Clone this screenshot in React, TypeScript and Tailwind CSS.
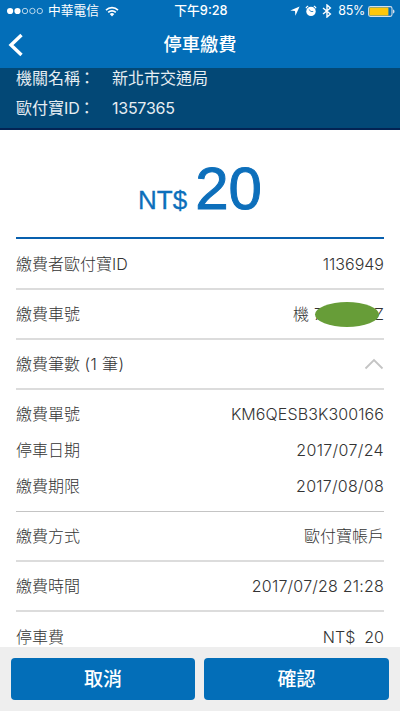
import type { ReactNode } from "react";
import clsx from "clsx";

type DetailRowProps = {
    label: ReactNode;
    children: ReactNode;
    className?: string;
};

const statusIconClass = "shrink-0 text-white";

function StatusBar() {
    return (
        <div className="grid h-[22px] grid-cols-[1fr_auto_1fr] items-center pr-[5px] pl-[7px] text-[12px] text-white">
            <div className="flex items-center">
                <svg width="37" height="8" viewBox="0 0 37 8" className={statusIconClass}>
                    <circle cx="3.1" cy="4" r="3.1" fill="currentColor" />
                    <circle cx="10.5" cy="4" r="3.1" fill="currentColor" />
                    {[18, 25.4, 32.8].map((cx) => (
                        <circle
                            key={cx}
                            cx={cx}
                            cy="4"
                            r="2.7"
                            fill="none"
                            stroke="currentColor"
                            strokeWidth="0.7"
                        />
                    ))}
                </svg>
                <span className="ml-[4px] text-[12.75px] leading-none whitespace-nowrap">中華電信</span>
                <svg width="14" height="11" viewBox="0 0 14 11" className={clsx(statusIconClass, "ml-[6px]")}>
                    <path
                        d="M1 4.1a8.6 8.6 0 0 1 12 0M3.2 6.4a5.4 5.4 0 0 1 7.6 0"
                        fill="none"
                        stroke="currentColor"
                        strokeWidth="1.6"
                    />
                    <path d="M7 10.4 4.7 8.1a3.3 3.3 0 0 1 4.6 0z" fill="currentColor" />
                </svg>
            </div>

            <span className="pt-px text-[12.75px] leading-none font-medium">下午9:28</span>

            <div className="flex items-center justify-end">
                <svg width="10" height="10" viewBox="0 0 10 10" className={statusIconClass}>
                    <path d="M9.6.4 5.4 9.7 5 5.1.3 4.6z" fill="currentColor" />
                </svg>
                <svg width="12" height="12" viewBox="0 0 12 12" className={clsx(statusIconClass, "ml-[5px]")}>
                    <circle cx="6" cy="6.4" r="4.7" fill="currentColor" />
                    <path
                        d="M1 3.2A4 4 0 0 1 3.2 1M11 3.2A4 4 0 0 0 8.8 1"
                        fill="none"
                        stroke="currentColor"
                        strokeWidth="1.3"
                    />
                    <path d="M3.8 4.4 6 6.5h2.2" fill="none" stroke="#036eb8" strokeWidth="0.8" />
                </svg>
                <svg width="10" height="14" viewBox="0 0 10 14" className={clsx(statusIconClass, "ml-[5px]")}>
                    <path
                        d="m1 4 7.4 6L5 13V1l3.4 3L1 10"
                        fill="none"
                        stroke="currentColor"
                        strokeWidth="1.4"
                    />
                </svg>
                <span className="ml-[6px] pt-px text-[12.5px] leading-none tracking-[-0.3px]">85%</span>
                <svg width="27" height="11" viewBox="0 0 27 11" className={clsx(statusIconClass, "ml-[3px]")}>
                    <rect x=".6" y=".6" width="23.4" height="9.8" rx="1.8" fill="none" stroke="#d5dfe9" strokeWidth="1.1" />
                    <rect x="1.4" y="1.4" width="19" height="8.2" rx=".6" fill="#fdc70b" />
                    <path d="M25 3.5c2 .5 2 3.5 0 4z" fill="#d5dfe9" />
                </svg>
            </div>
        </div>
    );
}

function DetailRow({ label, children, className }: DetailRowProps) {
    return (
        <div className={clsx("flex items-center justify-between", className)}>
            <span>{label}</span>
            <span className="flex items-center whitespace-pre">{children}</span>
        </div>
    );
}

const rowClass = "border-b-2 border-[#dcdcdc]";
const buttonClass = "h-[42px] rounded-[4px] bg-[#036eb8] pt-[2px] text-[19px] font-medium text-white";

export default function App() {
    return (
        <div className="flex h-[711px] w-[400px] flex-col overflow-hidden bg-white font-[Inter,'Noto_Sans_CJK_TC',sans-serif]">
            <header className="h-[68px] shrink-0 bg-[#036eb8]">
                <StatusBar />
                <div className="grid h-[46px] grid-cols-[1fr_auto_1fr] items-center px-[8px] text-white">
                    <svg width="16" height="24" viewBox="0 0 16 24">
                        <path d="M13.5 2 3 12l10.5 10" fill="none" stroke="currentColor" strokeWidth="3.4" />
                    </svg>
                    <h1 className="text-[18.25px] font-medium">停車繳費</h1>
                </div>
            </header>

            <section className="flex h-[62px] shrink-0 flex-col overflow-hidden border-b-2 border-[#032353] bg-[#034876] pl-4 text-[16px] text-[#e6edf2]">
                <div className="-mt-[5px] flex h-[30px] items-center">
                    <span className="w-24">
                        機關名稱<span className="-ml-px">：</span>
                    </span>
                    <span>新北市交通局</span>
                </div>
                <div className="flex h-[30px] items-center">
                    <span className="w-24">
                        歐付寶ID<span className="-ml-px">：</span>
                    </span>
                    <span className="tracking-[-0.25px]">1357365</span>
                </div>
            </section>

            <main className="min-h-0 flex-1 overflow-hidden px-4 text-[16px] font-light text-[#333]">
                <div className="flex h-[109px] items-baseline justify-center border-b-2 border-[#0860ae] pt-[14px] font-['Liberation_Sans',Arial,sans-serif] font-normal text-[#0d6fbb]">
                    <span className="mr-[8px] text-[26px] [-webkit-text-stroke:0.3px_#0d6fbb]">NT$</span>
                    <span className="text-[60px] [-webkit-text-stroke:1px_#0d6fbb]">20</span>
                </div>
                <DetailRow label="繳費者歐付寶ID" className={clsx(rowClass, "h-[51px] pt-px")}>
                    1136949
                </DetailRow>
                <DetailRow label="繳費車號" className={clsx(rowClass, "h-[50px]")}>
                    <span className="mr-[5px]">機</span>
                    <span className="relative flex w-[70px] justify-between">
                        <span>7</span>
                        <span>Z</span>
                        <span className="absolute top-0 left-px h-[25px] w-[64px] rounded-[50%] bg-[#679d38]" />
                    </span>
                </DetailRow>
                <DetailRow
                    label={
                        <>
                            繳費筆數 <span className="tracking-[0.4px]">(1 筆)</span>
                        </>
                    }
                    className={clsx(rowClass, "h-[50px]")}
                >
                    <svg width="20" height="12" viewBox="0 0 20 12">
                        <path d="m1.5 10.5 8.5-8.5 8.5 8.5" fill="none" stroke="#c4c4c4" strokeWidth="1.8" />
                    </svg>
                </DetailRow>
                <div className="h-[122px] border-b border-[#c4c4c4] pt-[6px]">
                    <DetailRow label="繳費單號" className="h-9">
                        <span className="tracking-[0.1px]">KM6QESB3K300166</span>
                    </DetailRow>
                    <DetailRow label="停車日期" className="h-9">
                        <span className="tracking-[0.35px]">2017/07/24</span>
                    </DetailRow>
                    <DetailRow label="繳費期限" className="h-9">
                        <span className="tracking-[0.25px]">2017/08/08</span>
                    </DetailRow>
                </div>
                <DetailRow label="繳費方式" className={clsx(rowClass, "h-[50px]")}>
                    歐付寶帳戶
                </DetailRow>
                <DetailRow label="繳費時間" className={clsx(rowClass, "h-[50px]")}>
                    <span className="tracking-[0.2px]">2017/07/28 21:28</span>
                </DetailRow>
                <DetailRow label="停車費" className="h-[49px]">
                    {"NT$  20"}
                </DetailRow>
            </main>

            <footer className="grid h-16 shrink-0 grid-cols-[184px_185px] gap-[9px] bg-[#eee] px-[11px] pt-[11px]">
                <button type="button" className={buttonClass}>
                    取消
                </button>
                <button type="button" className={buttonClass}>
                    確認
                </button>
            </footer>
        </div>
    );
}
